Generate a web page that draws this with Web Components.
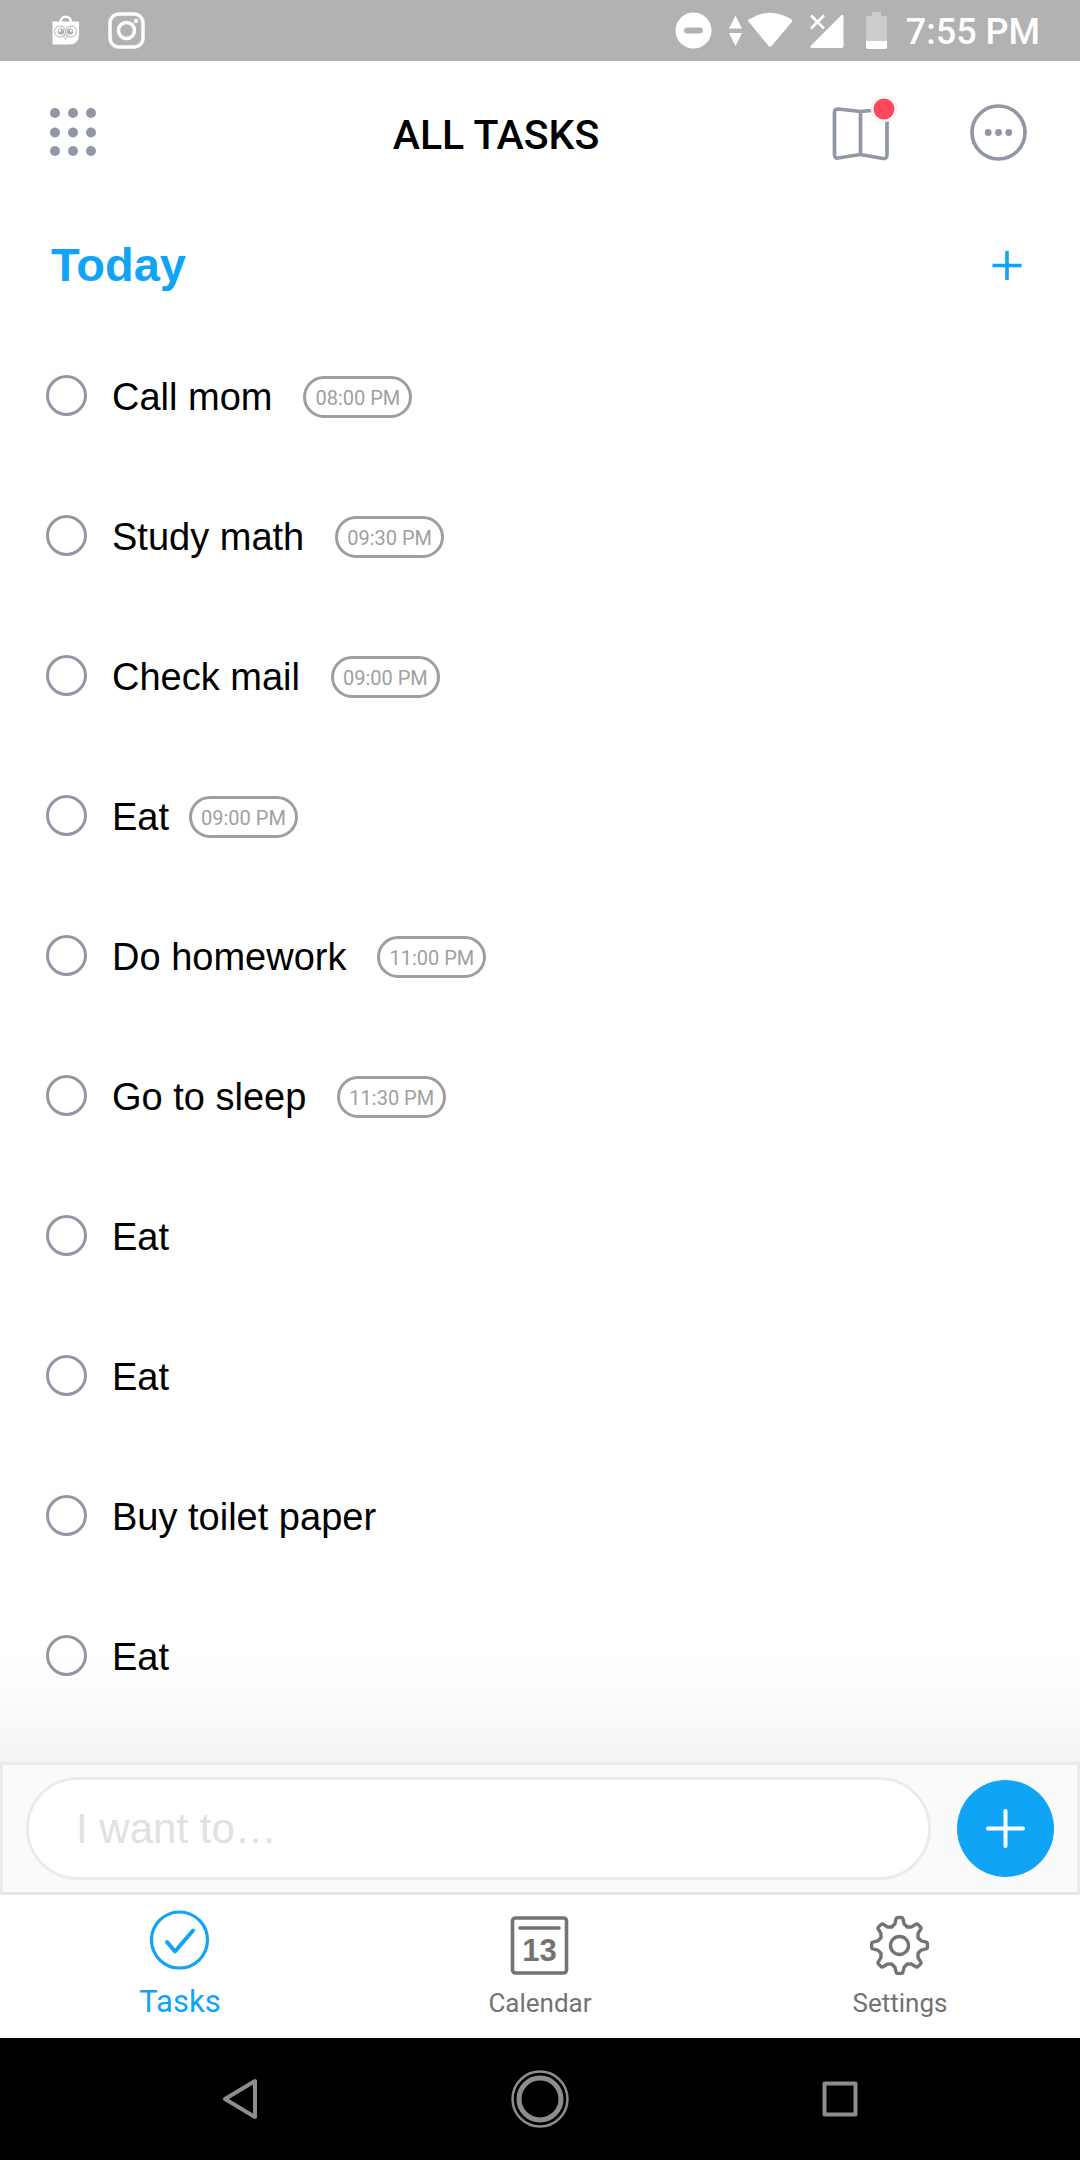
<!DOCTYPE html>
<html lang="en">
<head>
<meta charset="utf-8">
<meta name="viewport" content="width=device-width">
<title>All Tasks</title>
<style>
  html, body { margin: 0; height: 100%; background: #fff; }
</style>
</head>
<body>
<tasks-app></tasks-app>
<script>
const define = (name, html, setup) => {
  const template = document.createElement('template');
  template.innerHTML = html;
  customElements.define(name, class extends HTMLElement {
    constructor() {
      super();
      this.attachShadow({ mode: 'open' }).append(template.content.cloneNode(true));
    }
    connectedCallback() { if (setup) setup(this, this.shadowRoot); }
  });
};

const reset = `
  :host, *, *::before { box-sizing: border-box; }
  svg { display: block; }
  button { border: 0; padding: 0; margin: 0; background: none; font: inherit; color: inherit; display: block; }
`;

/* Android status bar */
define('status-bar', `
<style>${reset}
  :host { display: flex; justify-content: space-between; align-items: center; height: 61px; padding: 0 40px 0 52px; background: #b2b2b2; color: #fff; }
  div { display: flex; align-items: center; }
  .left { gap: 28px; }
  time { font: 500 36px/44px Roboto, sans-serif; padding-top: 3px; margin-left: 19px; }
  .dnd { margin-right: 16px; }
  .wifi { margin-right: 16px; }
  .signal { margin-right: 22px; }
</style>
<div class="left">
  <svg width="28" height="37" viewBox="0 0 28 37" fill="none">
    <path d="M8.5 10C8.500 3 19 3 19 10" stroke="#fff" stroke-width="2.500"/>
    <path d="M.5 9.500h26.500v13q0 10-10 10H.5z" fill="#fff"/>
    <circle cx="8" cy="19.500" r="5.500" stroke="#b2b2b2"/><circle cx="19" cy="19.500" r="5.500" stroke="#b2b2b2"/>
    <circle cx="9" cy="19.500" r="3.200" fill="#b2b2b2"/><circle cx="18" cy="19.500" r="3.200" fill="#b2b2b2"/>
    <circle cx="8" cy="18.500" r="1.200" fill="#fff"/><circle cx="19" cy="18.500" r="1.200" fill="#fff"/>
    <path d="M11.500 24.500l2-1.200 2 1.200-2 3z" stroke="#b2b2b2" stroke-width=".8"/>
  </svg>
  <svg width="37" height="37" viewBox="0 0 37 37" fill="none" stroke="#fff" stroke-width="3.500">
    <rect x="2" y="2" width="33" height="33" rx="9"/><circle cx="18.500" cy="18.500" r="8"/>
    <circle cx="28" cy="9" r="2.200" fill="#fff" stroke="none"/>
  </svg>
</div>
<div>
  <svg class="dnd" width="37" height="37" viewBox="0 0 37 37"><circle cx="18.500" cy="18.500" r="18" fill="#fff"/><rect x="9" y="15.500" width="19" height="6" rx="3" fill="#b2b2b2"/></svg>
  <svg class="wifi" width="66" height="37" viewBox="0 0 66 37" fill="#fff">
    <path d="M7.500 3.500L14 16.500H1zM1 21h13L7.500 34z"/>
    <path d="M20.500 9.500q-1-1 0-2Q42-6 63.500 7.500q1.500 1 .5 2.200L43.500 34q-1.500 1.500-3 0z"/>
  </svg>
  <svg class="signal" width="34" height="37" viewBox="0 0 34 37" fill="#fff">
    <path d="M31 3.500q2-1.500 2.500.5v30q0 2-2 2H1.500q-2-.5-.5-2.500z"/><path d="M1 3.500l13 13M14 3.500l-13 13" stroke="#fff" stroke-width="2.500"/>
  </svg>
  <svg width="21" height="37" viewBox="0 0 21 37">
    <path d="M6 0h9v4h4q2 0 2 2v23H0V6q0-2 2-2h4z" fill="#ccc"/><path d="M0 29h21v6q0 2-2 2H2q-2 0-2-2z" fill="#fff"/>
  </svg>
  <time>7:55 PM</time>
</div>`);

define('app-header', `
<style>${reset}
  :host { display: flex; align-items: center; height: 143px; padding: 0 52px 0 50px; color: #9197a4; }
  h1 { flex: 1; margin: 0; padding: 5px 0 0 64px; font: 500 41px/54px Roboto, sans-serif; color: #000; text-align: center; }
  .actions { display: flex; align-items: center; gap: 80px; }
  .actions, .menu { flex: none; }
  .book { position: relative; }
  .badge { position: absolute; top: -10px; right: -9px; }
</style>
<button class="menu" aria-label="Menu">
  <svg width="46" height="57" viewBox="0 0 46 57" fill="currentColor">
    <circle cx="5" cy="9" r="5"/><circle cx="23" cy="9" r="5"/><circle cx="41" cy="9" r="5"/>
    <circle cx="5" cy="28.500" r="5"/><circle cx="23" cy="28.500" r="5"/><circle cx="41" cy="28.500" r="5"/>
    <circle cx="5" cy="47" r="5"/><circle cx="23" cy="47" r="5"/><circle cx="41" cy="47" r="5"/>
  </svg>
</button>
<h1><slot></slot></h1>
<div class="actions">
  <button class="book" aria-label="Moments">
    <svg width="58" height="57" viewBox="0 0 58 57" fill="none" stroke="currentColor" stroke-width="3.700" stroke-linejoin="round">
      <path d="M28.500 7.500L6 5Q2.500 5 2.500 8.500v42Q2.500 54.500 6 54L28.500 50.500 51 54.500q4 .5 4-3.500V8.500Q55 5 51 5.500zM28.500 8v42.500"/>
    </svg>
    <svg class="badge" width="30" height="30" viewBox="0 0 30 30"><circle cx="15" cy="15" r="13" fill="#fff" stroke="#ffd5da" stroke-width=".6"/><circle cx="15" cy="15" r="10.500" fill="#ff475d"/></svg>
  </button>
  <button aria-label="More">
    <svg width="58" height="57" viewBox="0 0 58 57" fill="currentColor">
      <circle cx="28.500" cy="28.500" r="26.500" fill="none" stroke="currentColor" stroke-width="3.700"/>
      <circle cx="18.200" cy="28.500" r="3.400"/><circle cx="28.500" cy="28.500" r="3.400"/><circle cx="38.800" cy="28.500" r="3.400"/>
    </svg>
  </button>
</div>`);

define('task-section', `
<style>${reset}
  :host { display: block; flex: 1; }
  header { display: flex; align-items: center; justify-content: space-between; height: 121px; padding: 0 58px 0 51px; color: #10a4f6; }
  h2 { margin: 0; font: 700 47px/56px "Liberation Sans", sans-serif; }
</style>
<header><h2><slot name="title"></slot></h2>
  <button aria-label="Add task for today"><svg width="30" height="30" viewBox="0 0 30 30" stroke="currentColor" stroke-width="3.600"><path d="M0.500 15.500h29M15 1v29"/></svg></button>
</header>
<div role="list"><slot></slot></div>`);

define('task-item', `
<style>${reset}
  :host { display: flex; align-items: center; height: 140px; padding: 0 46px; }
  input { appearance: none; width: 41px; height: 41px; margin: 0; border: 3px solid #9197a4; border-radius: 50%; flex: none; }
  input:checked { background: #10a4f6; }
  label { padding: 3px 0 0 25px; font: 38px/44px "Liberation Sans", sans-serif; color: #000; }
  .wide { padding-right: 11px; }
  time { margin: 3px 0 0 20px; padding: 0 9px; height: 42px; border: 3px solid #9e9e9e; border-radius: 21px; font: 20px/38px Roboto, sans-serif; color: #a0a0a0; }
</style>
<input type="checkbox" id="done"><label for="done"><slot></slot></label><time></time>`,
(host, root) => {
  host.setAttribute('role', 'listitem');
  const time = root.querySelector('time');
  const at = host.getAttribute('time');
  if (at) time.textContent = at; else time.remove();
  root.querySelector('label').classList.toggle('wide', host.textContent.includes(' '));
});

define('task-composer', `
<style>${reset}
  :host { display: block; }
  .shade { height: 120px; margin-top: -120px; background: linear-gradient(rgba(0,0,0,0), rgba(0,0,0,.011) 40%, rgba(0,0,0,.045)); position: relative; pointer-events: none; }
  form { display: flex; align-items: center; gap: 26px; height: 133px; margin: 0; padding: 0 23px; background: #fafafa; border: 3px solid #ebebeb; border-bottom-color: #e5e5e5; }
  input { flex: 1; min-width: 0; height: 103px; padding: 0 47px; border: 3px solid #ebebeb; border-radius: 52px; background: #fff; font: 42px/48px "Liberation Sans", sans-serif; color: #000; }
  input::placeholder { color: #e1e1e1; opacity: 1; }
  form button { width: 97px; height: 97px; border-radius: 50%; background: #10a4f6; display: grid; place-items: center; }
</style>
<div class="shade"></div>
<form>
  <input type="text" placeholder="I want to…" aria-label="New task">
  <button type="button" aria-label="Add task"><svg width="39" height="39" viewBox="0 0 39 39" stroke="#fff" stroke-width="4" stroke-linecap="round"><path d="M2 19.500h35M19.500 2v35"/></svg></button>
</form>`);

define('tab-link', `
<style>${reset}
  :host { display: block; flex: 1; }
  a { display: flex; flex-direction: column; align-items: center; justify-content: flex-end; height: 143px; padding-bottom: 17px; text-decoration: none; color: #737373; font: 26px/36px Roboto, sans-serif; gap: 10px; }
  :host([active]) a { color: #10a4f6; font-size: 31px; padding-bottom: 18px; gap: 14px; }
</style>
<a href="#"><slot name="icon"></slot><slot></slot></a>`);

define('tab-bar', `
<style>${reset}
  :host { display: block; }
  nav { display: flex; background: #fff; }
  text { font: 700 31px "Liberation Sans", sans-serif; }
</style>
<nav>
  <tab-link active><svg slot="icon" width="60" height="60" viewBox="0 0 60 60" fill="none" stroke="currentColor" stroke-width="3.200"><circle cx="29.500" cy="30" r="28"/><path d="M17 32l8 9.500L43 20.500" stroke-width="4" stroke-linecap="round" stroke-linejoin="round"/></svg>Tasks</tab-link>
  <tab-link><svg slot="icon" width="60" height="60" viewBox="0 0 60 60" fill="none" stroke="currentColor" stroke-width="3.600"><rect x="2.500" y="3" width="54" height="55" rx="3"/><path d="M10 13h39" stroke-linecap="round"/><text x="29.500" y="46" text-anchor="middle" fill="currentColor" stroke="none">13</text></svg>Calendar</tab-link>
  <tab-link><svg slot="icon" id="gear" width="60" height="60" viewBox="0 0 60 60" fill="none" stroke="currentColor" stroke-width="3.400" stroke-linejoin="round"><path/><circle cx="29.500" cy="30.500" r="9"/></svg>Settings</tab-link>
</nav>`,
(host, root) => {
  /* eight rounded teeth around the hub */
  const point = (deg, r) => {
    const a = deg * Math.PI / 180;
    return (29.5 + r * Math.sin(a)).toFixed(2) + ' ' + (30.5 - r * Math.cos(a)).toFixed(2);
  };
  let d = '';
  for (let i = 0; i < 8; i++) {
    const c = i * 45;
    d += (i ? 'L' : 'M') + point(c - 14, 21.7) + 'Q' + point(c - 11, 22) + ' ' + point(c - 10, 24)
      + 'L' + point(c - 8, 26) + 'Q' + point(c - 7, 28) + ' ' + point(c - 4, 28) + 'L' + point(c + 4, 28)
      + 'Q' + point(c + 7, 28) + ' ' + point(c + 8, 26) + 'L' + point(c + 10, 24)
      + 'Q' + point(c + 11, 22) + ' ' + point(c + 14, 21.7) + 'L' + point(c + 22.5, 20);
  }
  root.querySelector('#gear path').setAttribute('d', d + 'Z');
});

define('system-nav', `
<style>${reset}
  :host { display: flex; justify-content: space-around; align-items: center; height: 122px; padding: 0 90px; background: #000; color: #8d8d8d; }
  svg { fill: none; stroke: currentColor; }
</style>
<button aria-label="Back"><svg width="60" height="60" viewBox="0 0 60 60" stroke-width="4" stroke-linejoin="round"><path d="M45 12v36L15 30z"/></svg></button>
<button aria-label="Home"><svg width="60" height="60" viewBox="0 0 60 60"><circle cx="30" cy="30" r="27.500" stroke-width="2.500"/><circle cx="30" cy="30" r="21" stroke-width="5"/></svg></button>
<button aria-label="Recents"><svg width="60" height="60" viewBox="0 0 60 60" stroke-width="4" stroke-linejoin="round"><rect x="14.500" y="14.500" width="31" height="31"/></svg></button>`);

define('tasks-app', `
<style>
  :host { display: flex; flex-direction: column; min-height: 100vh; background: #fff; }
</style>
<status-bar></status-bar>
<app-header>ALL TASKS</app-header>
<task-section>
  <span slot="title">Today</span>
  <task-item time="08:00 PM">Call mom</task-item>
  <task-item time="09:30 PM">Study math</task-item>
  <task-item time="09:00 PM">Check mail</task-item>
  <task-item time="09:00 PM">Eat</task-item>
  <task-item time="11:00 PM">Do homework</task-item>
  <task-item time="11:30 PM">Go to sleep</task-item>
  <task-item>Eat</task-item>
  <task-item>Eat</task-item>
  <task-item>Buy toilet paper</task-item>
  <task-item>Eat</task-item>
</task-section>
<task-composer></task-composer>
<tab-bar></tab-bar>
<system-nav></system-nav>`);
</script>
</body>
</html>
